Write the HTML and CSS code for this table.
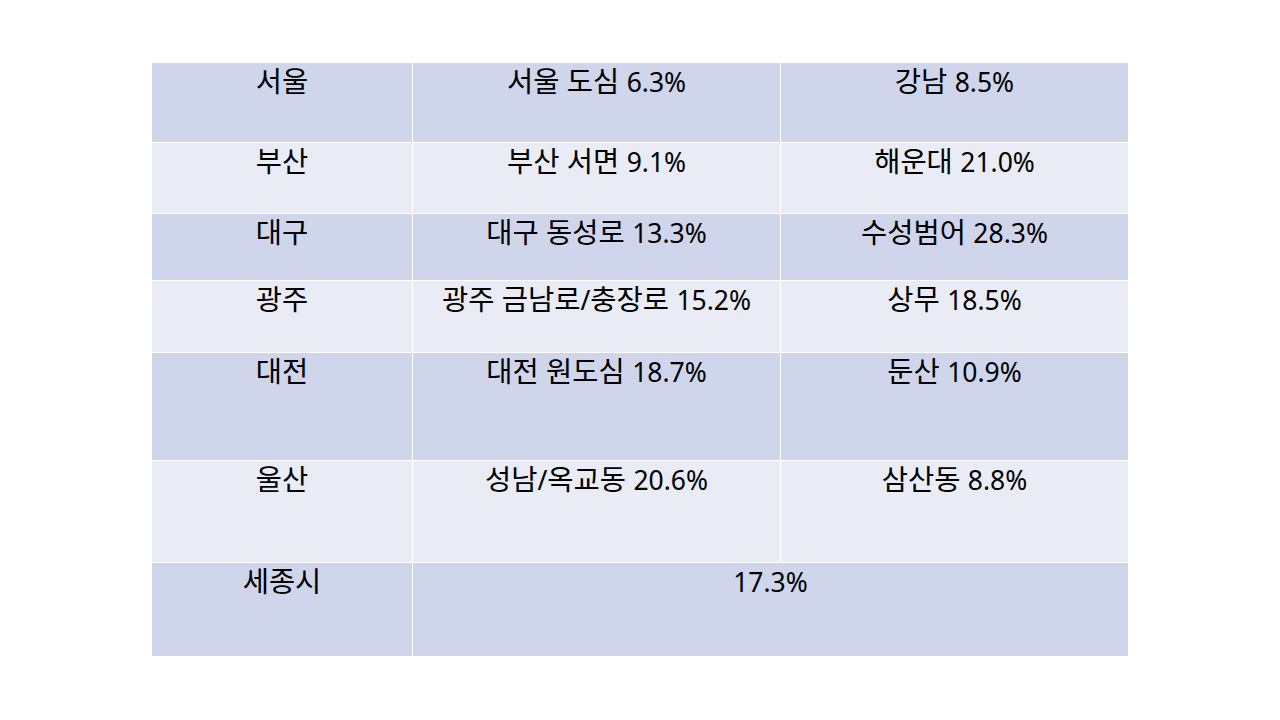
FILE: index.html
```html
<!DOCTYPE html>
<html lang="ko">
<head>
<meta charset="utf-8">
<title>지역별 공실률</title>
<link rel="stylesheet" href="styles.css">
</head>
<body>
<div class="slide">
  <div class="table">
    <div class="cell dark">서울</div>
    <div class="cell dark">서울 도심 <span class="n">6.3%</span></div>
    <div class="cell dark">강남 <span class="n">8.5%</span></div>

    <div class="cell light">부산</div>
    <div class="cell light">부산 서면 <span class="n">9.1%</span></div>
    <div class="cell light">해운대 <span class="n">21.0%</span></div>

    <div class="cell dark">대구</div>
    <div class="cell dark">대구 동성로 <span class="n">13.3%</span></div>
    <div class="cell dark">수성범어 <span class="n">28.3%</span></div>

    <div class="cell light">광주</div>
    <div class="cell light">광주 금남로<span class="n">/</span>충장로 <span class="n">15.2%</span></div>
    <div class="cell light">상무 <span class="n">18.5%</span></div>

    <div class="cell dark">대전</div>
    <div class="cell dark">대전 원도심 <span class="n">18.7%</span></div>
    <div class="cell dark">둔산 <span class="n">10.9%</span></div>

    <div class="cell light">울산</div>
    <div class="cell light">성남<span class="n">/</span>옥교동 <span class="n">20.6%</span></div>
    <div class="cell light">삼산동 <span class="n">8.8%</span></div>

    <div class="cell dark">세종시</div>
    <div class="cell dark span2"><span class="n">17.3%</span></div>
  </div>
</div>
</body>
</html>
```

FILE: styles.css
```css
html, body {
  margin: 0;
  padding: 0;
  background: #ffffff;
}
.slide {
  width: 1280px;
  height: 720px;
  padding: 63px 0 0 152px;
  box-sizing: border-box;
}
.table {
  width: 976px;
  display: grid;
  grid-template-columns: 260px 367px 347px;
  grid-template-rows: 79px 70px 66px 71px 107px 101px 93px;
  gap: 1px;
  background: #ffffff;
  font-family: "Noto Sans", "Noto Sans CJK KR", sans-serif;
  font-size: 28.5px;
  color: #000000;
}
.cell {
  text-align: center;
  padding-top: 0;
  line-height: 36px;
}
.n {
  font-size: 26.5px;
}
.dark {
  background: #cfd5ea;
}
.light {
  background: #e9ebf5;
}
.span2 {
  grid-column: span 2;
}
```
